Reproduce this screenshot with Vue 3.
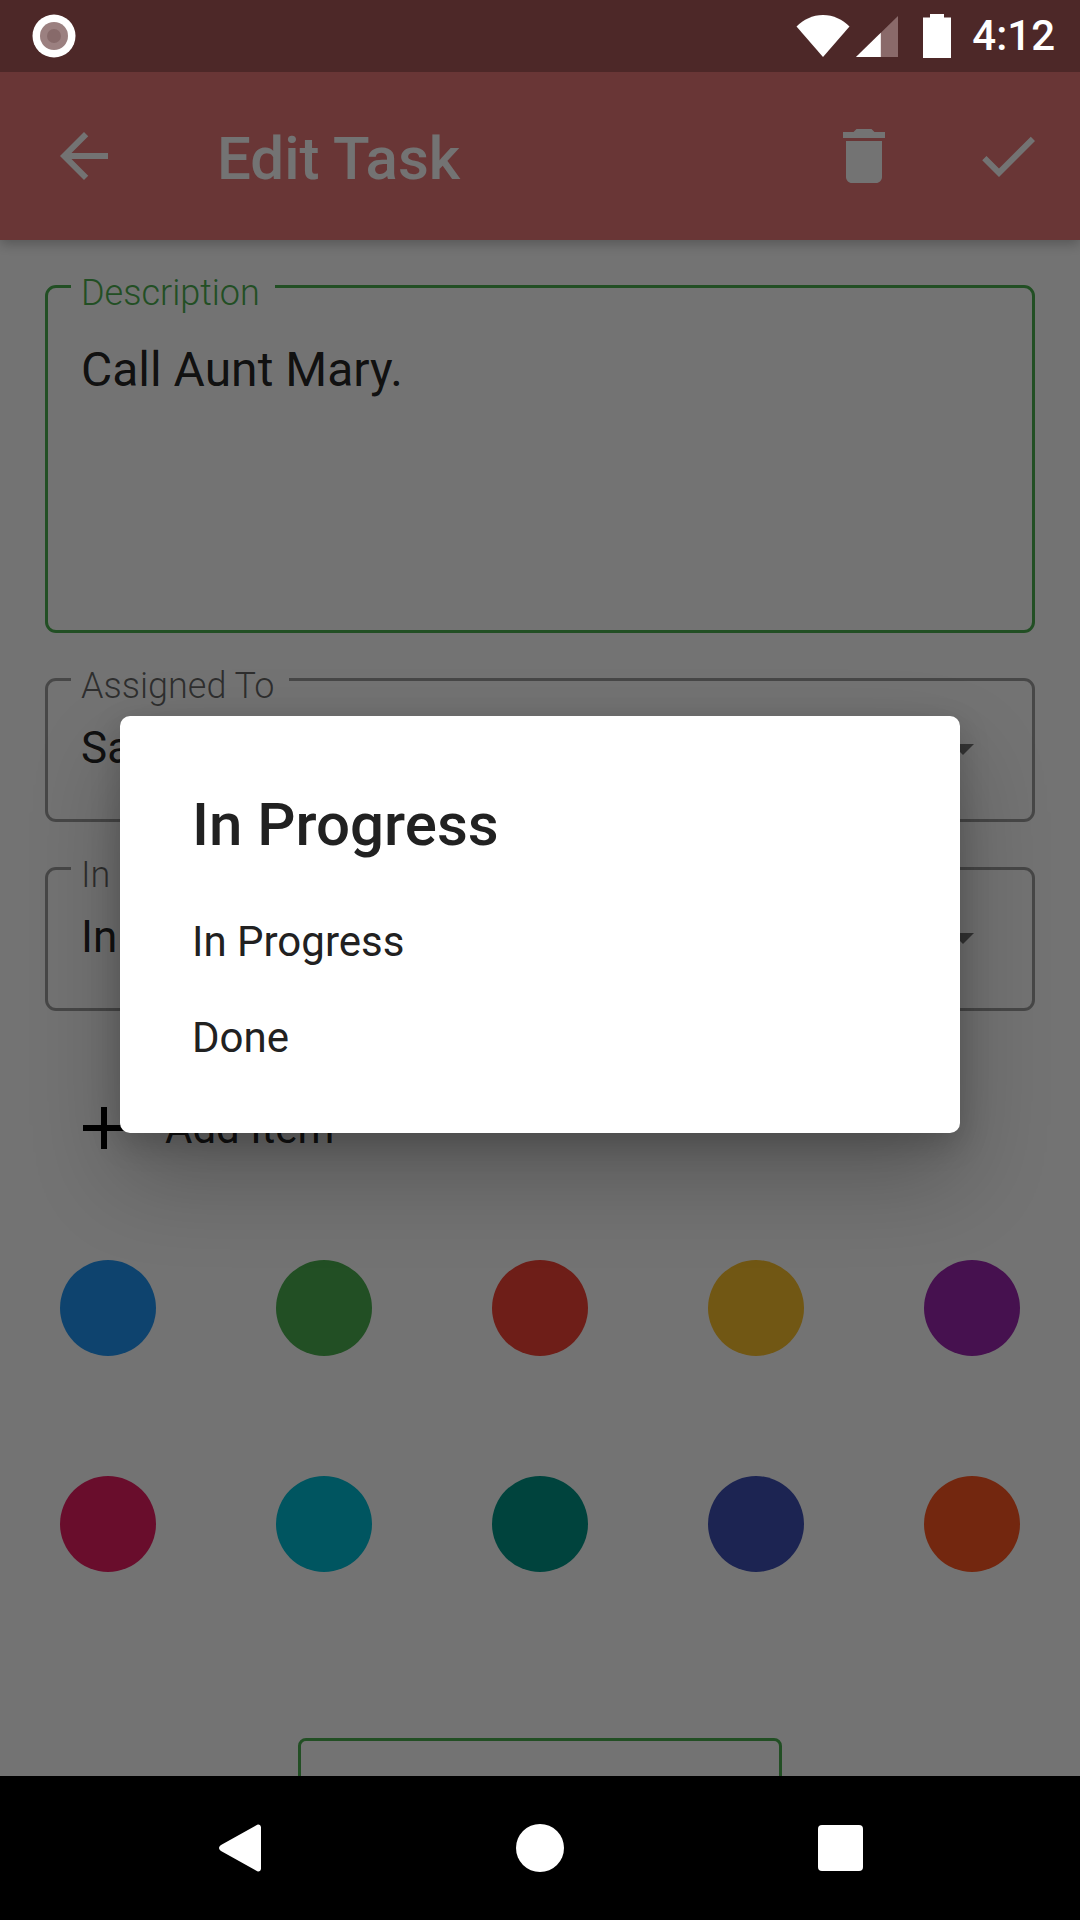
<template>
  <div class="screen">
    <div class="status-bar">
      <svg class="rec-icon" viewBox="0 0 44 44">
        <circle cx="22" cy="22" r="21.5" fill="#fff" />
        <circle cx="22" cy="22" r="14" fill="#9b8080" />
        <circle cx="22" cy="22" r="7" fill="#876a6a" />
      </svg>
      <div class="status-right">
        <svg class="wifi" viewBox="0 0 54 42">
          <path d="M0.5 11.5C7.5 4.5 16.5 0 27 0s19.500 4.500 26.500 11.500L27 42z" fill="#fff" />
        </svg>
        <svg class="signal" viewBox="0 0 44 43">
          <path d="M0 43L44 0v43z" fill="#8a6a6a" />
          <path d="M0 43L26 17.500V43z" fill="#fff" />
        </svg>
        <svg class="battery" viewBox="0 0 28 44">
          <path d="M7 3.500V0h14v3.500h7V44H0V3.500z" fill="#fff" />
        </svg>
        <span class="clock">4:12</span>
      </div>
    </div>

    <div class="body">
      <header class="app-bar">
        <svg class="bar-icon" viewBox="0 0 24 24">
          <path d="M20 11H7.830l5.590-5.590L12 4l-8 8 8 8 1.410-1.410L7.830 13H20v-2z" />
        </svg>
        <h1 class="bar-title">Edit Task</h1>
        <svg class="bar-icon" viewBox="0 0 24 24">
          <path d="M6 19c0 1.100.9 2 2 2h8c1.100 0 2-.9 2-2V7H6v12zM19 4h-3.500l-1-1h-5l-1 1H5v2h14V4z" />
        </svg>
        <svg class="bar-icon check" viewBox="0 0 24 24">
          <path d="M9 16.170L4.830 12l-1.420 1.410L9 19 21 7l-1.410-1.410z" />
        </svg>
      </header>

      <main class="form">
        <div class="field field-desc">
          <span class="field-label">Description</span>
          <span class="field-value">Call Aunt Mary.</span>
        </div>
        <div class="field field-select">
          <span class="field-label">Assigned To</span>
          <span class="field-value">Sam</span>
          <i class="caret"></i>
        </div>
        <div class="field field-select">
          <span class="field-label">In Progress</span>
          <span class="field-value">In Progress</span>
          <i class="caret"></i>
        </div>

        <div class="add-row">
          <svg class="add-icon" viewBox="0 0 24 24">
            <path d="M19 13h-6v6h-2v-6H5v-2h6V5h2v6h6v2z" />
          </svg>
          <span>Add Item</span>
        </div>

        <div class="swatches">
          <div v-for="color in colors" :key="color" class="swatch-cell">
            <span class="swatch" :style="{ background: color }"></span>
          </div>
        </div>

        <div class="save-box"></div>
      </main>

      <div class="scrim">
        <div class="dialog">
          <h2 class="dialog-title">In Progress</h2>
          <div v-for="option in options" :key="option" class="dialog-item">{{ option }}</div>
        </div>
      </div>
    </div>

    <nav class="nav-bar">
      <svg class="nav-back" viewBox="0 0 42 48">
        <path d="M37 1.500c2-1.800 5-.8 5 2v41c0 2.800-3 3.800-5 2L2 27c-2.600-1.600-2.600-4.400 0-6z" fill="#fff" />
      </svg>
      <span class="nav-home"></span>
      <span class="nav-recent"></span>
    </nav>
  </div>
</template>

<script setup>
const colors = [
  '#2196f3', '#4caf50', '#f44336', '#fbc02d', '#9c27b0',
  '#e91e63', '#00bcd4', '#009688', '#3f51b5', '#ff5722'
]

const options = ['In Progress', 'Done']
</script>

<style>
html, body {
  margin: 0;
  background: #000;
}
</style>

<style scoped>
.screen {
  width: 1080px;
  height: 1920px;
  display: flex;
  flex-direction: column;
  overflow: hidden;
  font-family: Roboto, "Liberation Sans", sans-serif;
  background: #fff;
}

.status-bar {
  height: 72px;
  flex: none;
  display: flex;
  align-items: center;
  justify-content: space-between;
  padding: 0 25px 0 32px;
  background: #4d2828;
  color: #fff;
}

.rec-icon {
  width: 44px;
  height: 44px;
}

.status-right {
  display: flex;
  align-items: center;
}

.wifi {
  width: 54px;
  height: 42px;
}

.signal {
  width: 42px;
  height: 43px;
  margin-left: 6px;
}

.battery {
  width: 28px;
  height: 44px;
  margin-left: 25px;
}

.clock {
  margin-left: 21px;
  font-size: 42px;
  font-weight: 500;
  line-height: 44px;
}

.body {
  flex: 1;
  min-height: 0;
  position: relative;
  overflow: hidden;
}

.app-bar {
  height: 168px;
  display: flex;
  align-items: center;
  padding: 0 36px 0 48px;
  background: #e97878;
  box-shadow: 0 4px 12px rgba(0, 0, 0, 0.25);
  position: relative;
}

.bar-icon {
  width: 72px;
  height: 72px;
  fill: #fff;
}

.bar-icon.check {
  margin-left: 72px;
}

.bar-title {
  flex: 1;
  margin: 0 0 0 97px;
  padding-top: 4px;
  font-size: 60px;
  font-weight: 500;
  color: #fff;
}

.form {
  padding: 45px 45px 0 45px;
  display: flex;
  flex-direction: column;
}

.field {
  position: relative;
  display: flex;
  border: 3px solid rgba(0, 0, 0, 0.38);
  border-radius: 11px;
  padding: 0 33px;
  color: rgba(0, 0, 0, 0.87);
  box-sizing: border-box;
}

.field-desc {
  height: 348px;
  padding-top: 54px;
  border-color: #4caf50;
  margin-bottom: 45px;
  font-size: 48px;
}

.field-select {
  height: 144px;
  margin-bottom: 45px;
  padding-top: 39px;
  font-size: 44px;
}

.field-label {
  position: absolute;
  top: -16px;
  left: 23px;
  padding: 0 15px 0 10px;
  background: #fff;
  font-size: 36px;
  line-height: 42px;
  font-weight: 300;
  color: rgba(0, 0, 0, 0.6);
}

.field-desc .field-label {
  color: #4caf50;
}

.field-value {
  line-height: 56px;
}

.caret {
  position: absolute;
  right: 58px;
  top: 63px;
  border-left: 11px solid transparent;
  border-right: 11px solid transparent;
  border-top: 11px solid rgba(0, 0, 0, 0.54);
}

.add-row {
  height: 144px;
  display: flex;
  align-items: center;
  margin-left: 23px;
  font-size: 42px;
  color: rgba(0, 0, 0, 0.87);
}

.add-icon {
  width: 72px;
  height: 72px;
  margin-right: 25px;
  fill: #000;
}

.swatches {
  margin: 0 -45px;
  display: grid;
  grid-template-columns: repeat(5, 216px);
  grid-auto-rows: 216px;
}

.swatch-cell {
  display: flex;
  align-items: center;
  justify-content: center;
}

.swatch {
  width: 96px;
  height: 96px;
  border-radius: 50%;
}

.save-box {
  width: 484px;
  height: 120px;
  flex: none;
  align-self: center;
  margin-top: 106px;
  box-sizing: border-box;
  border: 3px solid #4caf50;
  border-radius: 8px;
}

.scrim {
  position: absolute;
  inset: 0;
  display: flex;
  align-items: center;
  justify-content: center;
  background: rgba(0, 0, 0, 0.55);
}

.dialog {
  width: 840px;
  height: 417px;
  box-sizing: border-box;
  padding-top: 62px;
  background: #fff;
  border-radius: 10px;
  box-shadow: 0 44px 90px rgba(0, 0, 0, 0.24), 0 10px 30px rgba(0, 0, 0, 0.18);
}

.dialog-title {
  margin: 0 0 22px;
  padding: 0 73px 0 72px;
  font-size: 60px;
  line-height: 94px;
  font-weight: 500;
  color: #212121;
}

.dialog-item {
  height: 96px;
  padding: 0 72px;
  font-size: 42px;
  line-height: 96px;
  color: #212121;
}

.nav-bar {
  height: 144px;
  flex: none;
  background: #000;
  position: relative;
  display: flex;
  align-items: center;
}

.nav-back {
  width: 42px;
  height: 48px;
  margin-left: 219px;
}

.nav-home {
  width: 48px;
  height: 48px;
  margin-left: 255px;
  border-radius: 50%;
  background: #fff;
}

.nav-recent {
  width: 45px;
  height: 46px;
  margin-left: 254px;
  border-radius: 4px;
  background: #fff;
}
</style>
